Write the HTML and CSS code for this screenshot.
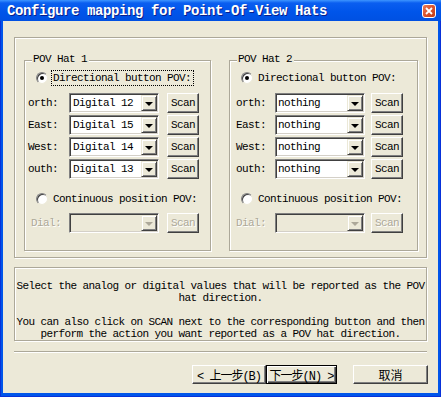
FILE: index.html
```html
<!DOCTYPE html>
<html lang="en">
<head>
    <meta charset="UTF-8">
    <meta name="viewport" content="width=device-width, initial-scale=1.0">
    <title>Configure mapping for Point-Of-View Hats</title>
    <link rel="stylesheet" href="styles.css">
</head>
<body>

    <div class="window">

        <div class="titlebar">
            <span class="title">Configure mapping for Point-Of-View Hats</span>
            <span class="close-button">
                <svg width="8" height="8" viewBox="0 0 8 8"><path d="M1 1 L7 7 M7 1 L1 7" stroke="#ffffff" stroke-width="1.8"/></svg>
            </span>
        </div>

        <div class="client">

            <div class="panel">

                <div class="group hat1">
                    <div class="group-title">POV Hat 1</div>
                    <div class="radio-row">
                        <span class="radio checked"></span>
                        <span class="radio-label focused">Directional button POV:</span>
                    </div>
                    <div class="rows">
                        <div class="row">
                            <span class="dir">orth:</span>
                            <div class="combo"><span class="value">Digital 12</span><span class="drop"></span></div>
                            <button class="scan">Scan</button>
                        </div>
                        <div class="row">
                            <span class="dir">East:</span>
                            <div class="combo"><span class="value">Digital 15</span><span class="drop"></span></div>
                            <button class="scan">Scan</button>
                        </div>
                        <div class="row">
                            <span class="dir">West:</span>
                            <div class="combo"><span class="value">Digital 14</span><span class="drop"></span></div>
                            <button class="scan">Scan</button>
                        </div>
                        <div class="row">
                            <span class="dir">outh:</span>
                            <div class="combo"><span class="value">Digital 13</span><span class="drop"></span></div>
                            <button class="scan">Scan</button>
                        </div>
                    </div>
                    <div class="radio-row continuous">
                        <span class="radio"></span>
                        <span class="radio-label">Continuous position POV:</span>
                    </div>
                    <div class="row dial disabled">
                        <span class="dir">Dial:</span>
                        <div class="combo"><span class="value"></span><span class="drop"></span></div>
                        <button class="scan">Scan</button>
                    </div>
                </div>

                <div class="group hat2">
                    <div class="group-title">POV Hat 2</div>
                    <div class="radio-row">
                        <span class="radio checked"></span>
                        <span class="radio-label">Directional button POV:</span>
                    </div>
                    <div class="rows">
                        <div class="row">
                            <span class="dir">orth:</span>
                            <div class="combo"><span class="value">nothing</span><span class="drop"></span></div>
                            <button class="scan">Scan</button>
                        </div>
                        <div class="row">
                            <span class="dir">East:</span>
                            <div class="combo"><span class="value">nothing</span><span class="drop"></span></div>
                            <button class="scan">Scan</button>
                        </div>
                        <div class="row">
                            <span class="dir">West:</span>
                            <div class="combo"><span class="value">nothing</span><span class="drop"></span></div>
                            <button class="scan">Scan</button>
                        </div>
                        <div class="row">
                            <span class="dir">outh:</span>
                            <div class="combo"><span class="value">nothing</span><span class="drop"></span></div>
                            <button class="scan">Scan</button>
                        </div>
                    </div>
                    <div class="radio-row continuous">
                        <span class="radio"></span>
                        <span class="radio-label">Continuous position POV:</span>
                    </div>
                    <div class="row dial disabled">
                        <span class="dir">Dial:</span>
                        <div class="combo"><span class="value"></span><span class="drop"></span></div>
                        <button class="scan">Scan</button>
                    </div>
                </div>

            </div>

            <div class="info">
                <p>Select the analog or digital values that will be reported as the POV<br>hat direction.</p>
                <p>You can also click on SCAN next to the corresponding button and then<br>perform the action you want reported as a POV hat direction.</p>
            </div>

            <div class="separator"></div>

            <div class="buttons">
                <button class="wizard-button back">&lt; 上一步(<u>B</u>)</button>
                <button class="wizard-button next default">下一步(<u>N</u>) &gt;</button>
                <button class="wizard-button cancel">取消</button>
            </div>

        </div>

    </div>

</body>
</html>
```

FILE: styles.css
```css
body {
    margin: 0;
    background-color: #ffffff;
    font-family: "Liberation Mono", "Noto Sans CJK SC", monospace;
    font-size: 11px;
    letter-spacing: -0.6px;
    color: #000000;
}

.window {
    width: 441px;
    height: 397px;
    box-sizing: border-box;
    background-color: #0055EA;
    border: 1px solid #0831D9;
    border-top: none;
    display: flex;
    flex-direction: column;
}

.titlebar {
    height: 21px;
    margin: 0 -1px;
    background: linear-gradient(#3D95FF 0, #0A5EF0 3px, #0055EA 55%, #0050E2 100%);
    display: flex;
    align-items: center;
    padding: 1px 5px 0 7px;
    box-sizing: border-box;
}

.title {
    flex-grow: 1;
    color: #ffffff;
    font-weight: bold;
    font-size: 14px;
    letter-spacing: -0.4px;
    text-shadow: 1px 1px 0 #0A1E8A;
    white-space: nowrap;
}

.close-button {
    width: 14px;
    height: 14px;
    flex-shrink: 0;
    box-sizing: border-box;
    border: 1px solid #ffffff;
    border-radius: 3px;
    background: linear-gradient(135deg, #EC7A56 0%, #D9532E 50%, #C03A14 100%);
    display: flex;
    align-items: center;
    justify-content: center;
}

.client {
    flex-grow: 1;
    margin: 0 2px 3px 2px;
    background-color: #ECE9D8;
    padding: 16px 11px 0 11px;
    display: flex;
    flex-direction: column;
}

/* etched frames */
.panel, .group, .info {
    border: 1px solid #ACA899;
    box-shadow: inset 1px 1px 0 #ffffff, 1px 1px 0 #ffffff;
}

.panel {
    height: 221px;
    box-sizing: border-box;
    display: flex;
    gap: 18px;
    padding: 22px 8px 0 9px;
}

.group {
    width: 187px;
    height: 191px;
    box-sizing: border-box;
    padding: 0 0 0 1px;
}

.hat2 {
    width: 189px;
}

.group-title {
    width: fit-content;
    margin: -8px 0 0 6px;
    padding: 0 2px 0 1px;
    line-height: 12px;
    background-color: #ECE9D8;
}

.radio-row {
    display: flex;
    align-items: center;
    height: 16px;
    margin-top: 5px;
    padding-left: 10px;
}

.radio-row.continuous {
    margin-top: 12px;
}

.radio {
    width: 12px;
    height: 12px;
    box-sizing: border-box;
    border-radius: 50%;
    background-color: #ffffff;
    border: 1px solid;
    border-color: #808080 #ECE9D8 #ECE9D8 #808080;
    box-shadow: inset 1px 1px 0 #404040;
    position: relative;
}

.radio.checked::after {
    content: "";
    position: absolute;
    left: 3px;
    top: 3px;
    width: 4px;
    height: 4px;
    border-radius: 50%;
    background-color: #000000;
}

.radio-label {
    margin-left: 3px;
    padding: 0 2px 0 1px;
    line-height: 14px;
    border: 1px dotted transparent;
    white-space: nowrap;
}

.radio-label.focused {
    border-color: #000000;
}

.rows {
    margin-top: 7px;
    display: flex;
    flex-direction: column;
    gap: 2px;
}

.row {
    display: flex;
    align-items: center;
    height: 20px;
    padding-left: 2px;
}

.row.dial {
    margin-top: 6px;
}

.hat1 .dial .dir {
    padding-left: 3px;
    width: 38px;
}

.hat2 .row {
    padding-left: 5px;
}

.dir {
    width: 41px;
    flex-shrink: 0;
    white-space: nowrap;
}

.hat2 .dir {
    width: 39px;
}

.combo {
    width: 90px;
    height: 20px;
    box-sizing: border-box;
    background-color: #ffffff;
    border: 1px solid;
    border-color: #808080 #ffffff #ffffff #808080;
    box-shadow: inset 1px 1px 0 #404040, inset -1px -1px 0 #D4D0C8;
    padding: 1px;
    display: flex;
    align-items: center;
    margin-right: 8px;
}

.hat2 .combo {
    margin-right: 6px;
}

.value {
    flex-grow: 1;
    padding-left: 2px;
    white-space: nowrap;
}

.hat2 .value {
    padding-left: 1px;
}

.drop {
    width: 16px;
    height: 16px;
    box-sizing: border-box;
    background-color: #ECE9D8;
    border: 1px solid;
    border-color: #ECE9D8 #404040 #404040 #ECE9D8;
    box-shadow: inset 1px 1px 0 #ffffff, inset -1px -1px 0 #808080;
    display: flex;
    align-items: center;
    justify-content: center;
}

.drop::after {
    content: "";
    border-left: 4px solid transparent;
    border-right: 4px solid transparent;
    border-top: 4px solid #000000;
    margin-top: 1px;
}

.scan, .wizard-button {
    font-family: inherit;
    font-size: 11px;
    letter-spacing: inherit;
    color: #000000;
    background-color: #ECE9D8;
    border: 1px solid;
    border-color: #ffffff #404040 #404040 #ffffff;
    box-shadow: inset -1px -1px 0 #808080;
    padding: 0;
    margin: 0;
    box-sizing: border-box;
}

.scan {
    width: 32px;
    height: 20px;
    flex-shrink: 0;
}

.disabled .dir, .disabled .scan {
    color: #ACA899;
    text-shadow: 1px 1px 0 #ffffff;
}

.disabled .combo {
    background-color: #ECE9D8;
}

.disabled .drop::after {
    border-top-color: #ACA899;
}

.info {
    margin-top: 9px;
    height: 74px;
    box-sizing: border-box;
    padding-top: 12px;
    text-align: center;
    line-height: 12px;
    white-space: nowrap;
}

.info p {
    margin: 0 0 12px 0;
}

.separator {
    margin-top: 10px;
    height: 1px;
    background-color: #ACA899;
    border-bottom: 1px solid #ffffff;
}

.buttons {
    margin-top: 12px;
    display: flex;
    justify-content: flex-end;
    margin-right: -1px;
}

.wizard-button {
    width: 74px;
    height: 19px;
    font-size: 12px;
    letter-spacing: -1px;
    white-space: nowrap;
}

.wizard-button u {
    text-decoration: none;
}

.wizard-button.next {
    width: 71px;
}

.wizard-button.default {
    border: 1px solid #000000;
    box-shadow: inset 1px 1px 0 #ffffff, inset -1px -1px 0 #404040, inset -2px -2px 0 #808080;
}

.wizard-button.cancel {
    margin-left: 16px;
    width: 75px;
    letter-spacing: 0;
}
```
